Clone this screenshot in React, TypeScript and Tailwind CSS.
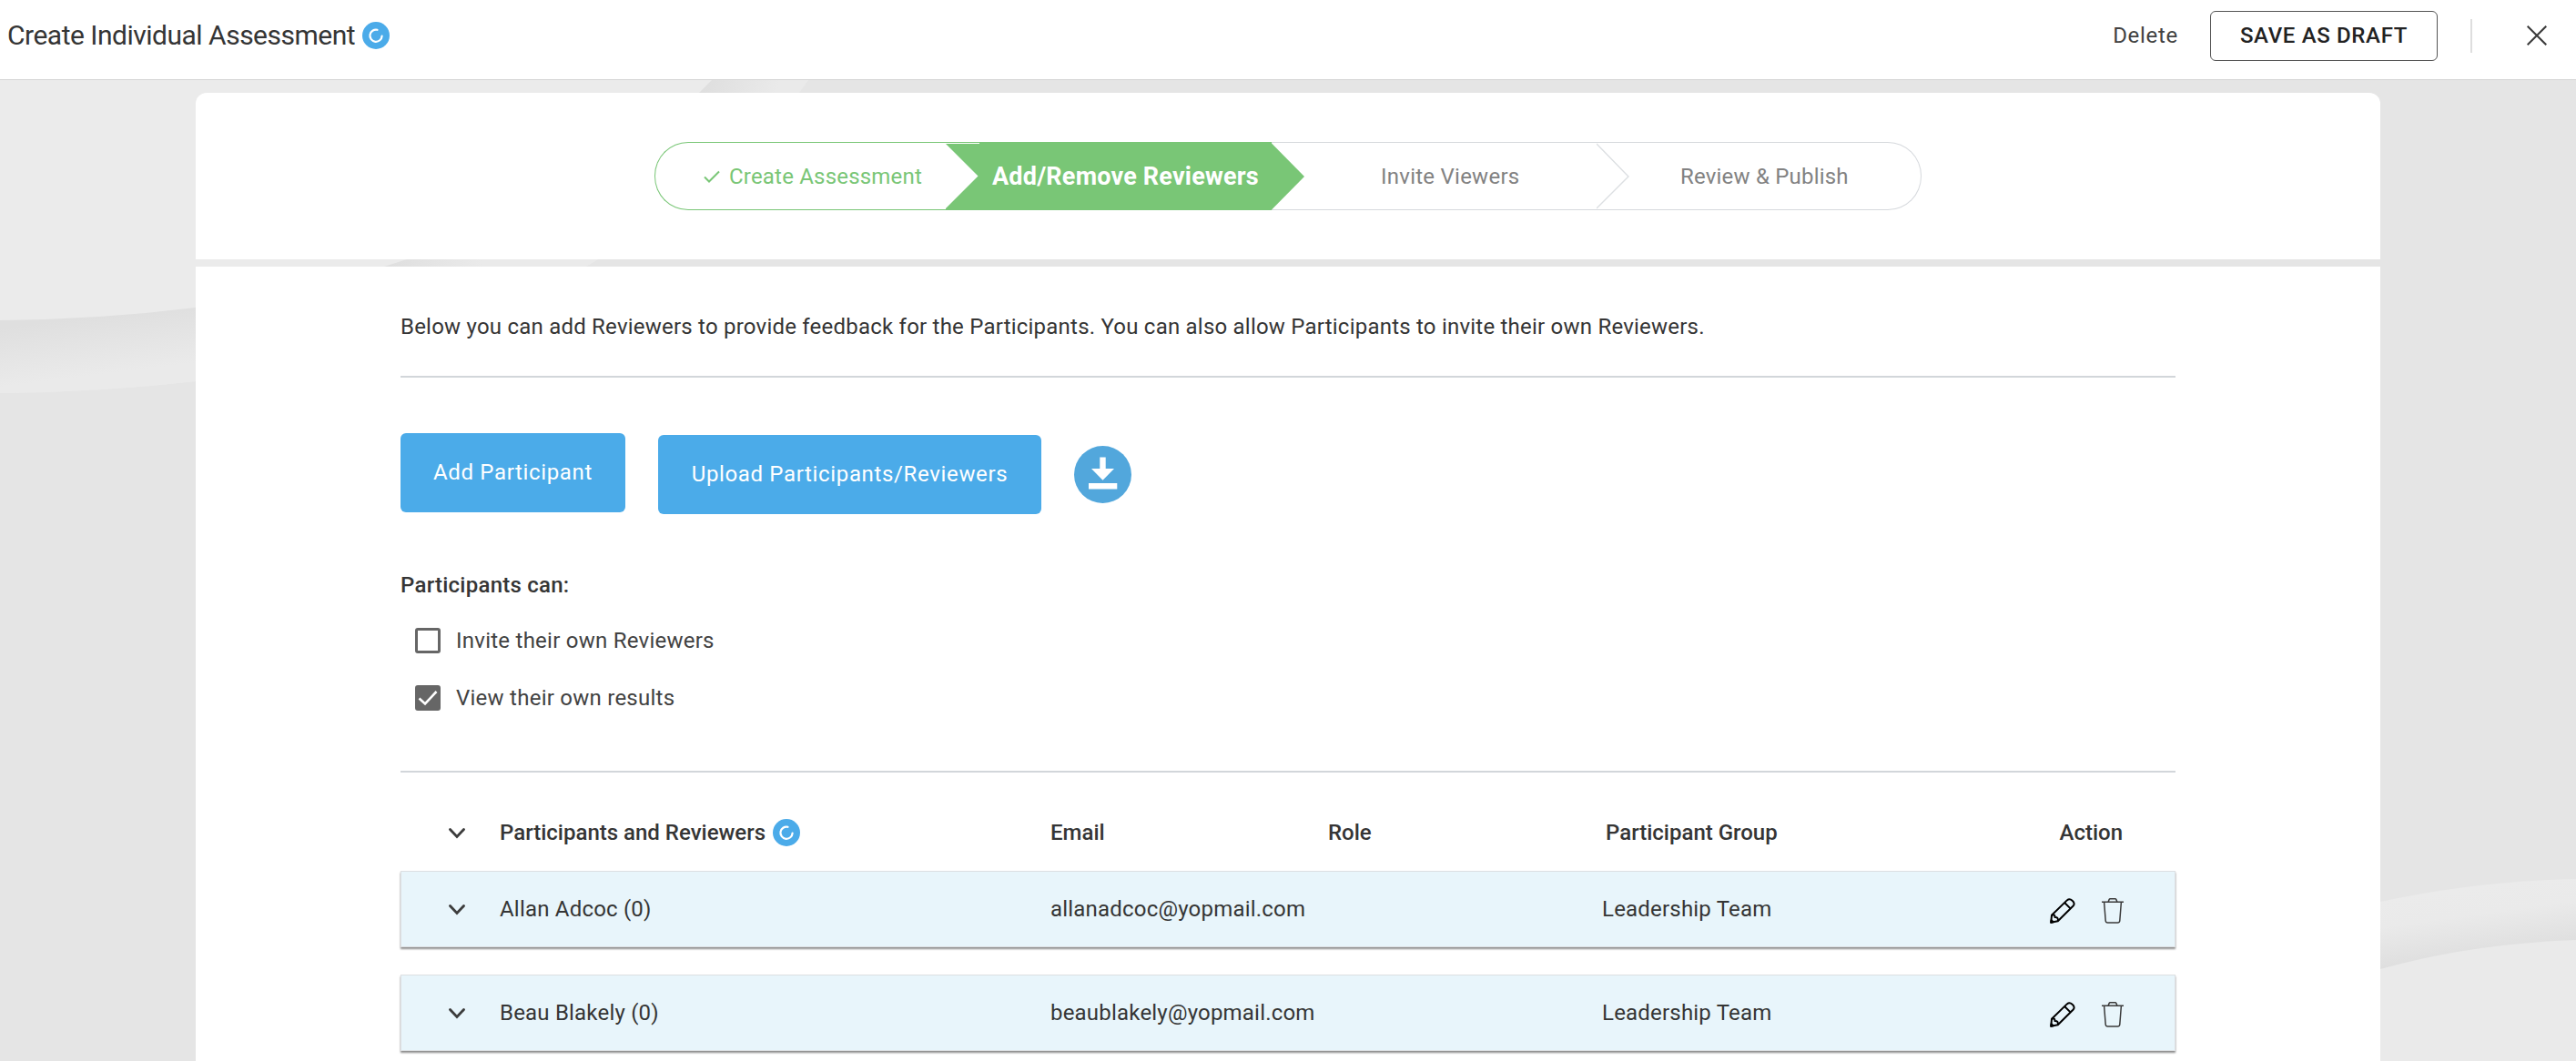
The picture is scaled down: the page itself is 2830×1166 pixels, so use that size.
import { useState } from "react";

const participants = [
  { name: "Allan Adcoc (0)", email: "allanadcoc@yopmail.com", group: "Leadership Team" },
  { name: "Beau Blakely (0)", email: "beaublakely@yopmail.com", group: "Leadership Team" },
];

function Backdrop() {
  return (
    <svg className="absolute inset-0 h-full w-full" viewBox="0 0 2830 1166" preserveAspectRatio="none">
      <defs>
        <linearGradient id="bandLeft" gradientUnits="userSpaceOnUse" x1="100" y1="348" x2="108" y2="412">
          <stop offset="0" stopColor="#dfdfdf" />
          <stop offset="1" stopColor="#eaeaea" />
        </linearGradient>
        <linearGradient id="bandMid" gradientUnits="userSpaceOnUse" x1="430" y1="290" x2="530" y2="290">
          <stop offset="0" stopColor="#dfdfdf" />
          <stop offset="1" stopColor="#eaeaea" />
        </linearGradient>
        <linearGradient id="bandTop" gradientUnits="userSpaceOnUse" x1="775" y1="95" x2="850" y2="115">
          <stop offset="0" stopColor="#dfdfdf" />
          <stop offset="1" stopColor="#eaeaea" />
        </linearGradient>
        <linearGradient id="bandRight" gradientUnits="userSpaceOnUse" x1="2720" y1="975" x2="2730" y2="1048">
          <stop offset="0" stopColor="#ebebeb" />
          <stop offset="0.4" stopColor="#eaeaea" />
          <stop offset="1" stopColor="#dfdfdf" />
        </linearGradient>
      </defs>
      <rect width="2830" height="1166" fill="#e5e5e5" />
      <path d="M0 0H950L888 88Q780 210 650 289Q430 375 215 419Q110 431 0 432Z" fill="#ebebeb" />
      <path d="M0 352Q110 351 215 338V419Q110 431 0 432Z" fill="url(#bandLeft)" />
      <path d="M447 285H657L644 293H422Z" fill="url(#bandMid)" />
      <path d="M782 88H888L878 102H768Z" fill="url(#bandTop)" />
      <path d="M2615 991Q2720 968 2830 966V1166H2615Z" fill="url(#bandRight)" />
      <path d="M2615 1065Q2715 1037 2830 1033V1166H2615Z" fill="#eaeaea" />
    </svg>
  );
}

function RefreshBadge() {
  return (
    <svg className="h-[30px] w-[30px] shrink-0" viewBox="0 0 30 30" fill="none">
      <circle cx="15" cy="15" r="15" fill="#4babe9" />
      <path d="M16.5 8.8A6.6 6.6 0 1 0 21.6 15.6" stroke="#fff" strokeWidth="2.2" strokeLinecap="round" />
    </svg>
  );
}

function Chevron() {
  return (
    <svg className="mt-0.5 h-3 w-[18px]" viewBox="0 0 18 12" fill="none">
      <path d="M1.5 1.5L9 9.5L16.5 1.5" stroke="#3c3c3c" strokeWidth="2.8" strokeLinecap="round" />
    </svg>
  );
}

function PencilIcon() {
  return (
    <svg className="h-7 w-7" viewBox="0 0 28 28" fill="none" stroke="#000" strokeWidth="2" strokeLinejoin="round">
      <path d="M2 18.8L18.8 2.4Q21.6 0 24.6 2.7Q28.2 5.8 25.4 8.8L8.8 25.2L1.2 26.8Z" />
      <path d="M16.4 5.2L22.8 11.6M2 18.8Q6 17.4 5.4 21Q9.6 20.6 8.8 25.2" />
      <path d="M1.2 26.8L1.6 24.2L3.8 26.2Z" fill="#000" />
    </svg>
  );
}

function TrashIcon() {
  return (
    <svg className="h-7 w-6" viewBox="0 0 24 28" fill="none" stroke="#3a3a3a" strokeWidth="1.5">
      <path d="M0 4.3H24M7 4.3L8.2 1.4Q8.5.8 9.3.8H14.7Q15.5.8 15.8 1.4L17 4.3" />
      <path d="M2.6 4.3L4.2 24.7Q4.4 27 6.6 27H17.4Q19.6 27 19.8 24.7L21.4 4.3" />
    </svg>
  );
}

function Stepper() {
  return (
    <div className="flex h-[75px] text-2xl text-[#828282]">
      <div className="flex w-[320px] items-center rounded-l-[37px] border-y border-l border-[#79c676] pl-[53px] text-[#79c676]">
        <svg className="h-3.5 w-[18px]" viewBox="0 0 18 14" fill="none">
          <path d="M1 7.5L6 12.5L17 1.5" stroke="#79c676" strokeWidth="2" />
        </svg>
        <span className="ml-2.5 whitespace-nowrap tracking-[0.2px]">Create Assessment</span>
      </div>

      <div className="relative flex w-[358px] items-center bg-[#79c676] pl-[51px] text-white">
        <svg className="absolute left-0 top-0 h-[75px] w-[37px]" viewBox="0 0 37 75" fill="#fff">
          <path d="M0 1H37V2H0ZM0 2L35.5 37.5L0 73Z" />
        </svg>
        <svg className="absolute left-full top-0 z-10 h-[75px] w-[36px]" viewBox="0 0 36 75" fill="#79c676">
          <path d="M0 1.5L36 38L0 74.5Z" />
        </svg>
        <span className="whitespace-nowrap pt-0.5 text-[27px] font-bold tracking-[0.2px]">Add/Remove Reviewers</span>
      </div>

      <div className="relative flex w-[357px] items-center border-y border-[#d6d9dd] pl-[120px]">
        <span className="whitespace-nowrap tracking-[0.25px]">Invite Viewers</span>
        <svg className="absolute left-full top-0 h-[73px] w-[36px]" viewBox="0 0 36 73" fill="none" stroke="#dcdfe2" strokeWidth="1.4">
          <path d="M0 1L35 37L0 72" />
        </svg>
      </div>

      <div className="flex w-[357px] items-center rounded-r-[37px] border-y border-r border-[#d6d9dd] pl-[92px]">
        <span className="whitespace-nowrap tracking-[0.2px]">Review &amp; Publish</span>
      </div>
    </div>
  );
}

function Checkbox({ label, checked, onChange }: { label: string; checked: boolean; onChange: () => void }) {
  return (
    <button onClick={onChange} className="flex h-9 items-center text-2xl tracking-[0.25px] text-[#424242]">
      <span
        className={`flex h-7 w-7 items-center justify-center rounded-[3px] border-[3px] border-[#666] ${
          checked ? "bg-[#666]" : "bg-white"
        }`}
      >
        {checked && (
          <svg className="h-[22px] w-[22px] shrink-0" viewBox="0 0 22 22" fill="none">
            <path d="M1.5 11.5L8 17.5L20.5 4" stroke="#fff" strokeWidth="2.6" />
          </svg>
        )}
      </span>
      <span className="ml-[17px]">{label}</span>
    </button>
  );
}

function App() {
  const [canInvite, setCanInvite] = useState(false);
  const [canView, setCanView] = useState(true);

  return (
    <div className="relative flex h-[1166px] w-[2830px] flex-col overflow-hidden font-['Roboto',sans-serif] text-2xl text-[#353535]">
      <Backdrop />

      {/* Header */}
      <header className="relative flex h-[88px] shrink-0 items-center justify-between border-b border-[#d6d6d6] bg-white pb-[9px] pl-2 pr-8">
        <div className="flex items-center gap-2">
          <h1 className="text-[30px] tracking-[-0.5px]">Create Individual Assessment</h1>
          <RefreshBadge />
        </div>
        <div className="flex items-center">
          <button className="tracking-[0.7px] text-[#424242]">Delete</button>
          <button className="ml-[35px] flex h-[55px] w-[250px] items-center justify-center rounded-md border border-[#555] font-medium tracking-[0.65px] text-[#222]">
            SAVE AS DRAFT
          </button>
          <div className="ml-9 h-[37px] w-0.5 bg-[#dedede]" />
          <svg className="ml-[60px] h-[22px] w-[22px]" viewBox="0 0 22 22" stroke="#3a3a3a" strokeWidth="2">
            <path d="M.7.7L21.3 21.3M21.3.7L.7 21.3" />
          </svg>
        </div>
      </header>

      <main className="relative flex grow flex-col gap-2 px-[215px] pt-3.5">
        <section className="flex h-[183px] shrink-0 justify-center rounded-t-xl bg-white pt-[54px]">
          <Stepper />
        </section>

        <section className="grow bg-white px-[225px] pt-12">
          <p className="h-9 leading-9 tracking-[0.22px]">
            Below you can add Reviewers to provide feedback for the Participants. You can also allow Participants to
            invite their own Reviewers.
          </p>
          <hr className="mt-9 border-t-2 border-[#d2d6da]" />

          <div className="mt-[61px] flex h-[89px] items-start">
            <button className="h-[87px] w-[247px] rounded-md bg-[#4babe9] pb-0.5 tracking-[0.65px] text-white">
              Add Participant
            </button>
            <button className="ml-9 mt-0.5 h-[87px] w-[421px] rounded-md bg-[#4babe9] pb-0.5 tracking-[0.65px] text-white">
              Upload Participants/Reviewers
            </button>
            <button className="ml-9 mt-3.5">
              <svg className="h-[63px] w-[63px]" viewBox="0 0 63 63">
                <circle cx="31.5" cy="31.5" r="31.5" fill="#52a7dc" />
                <path d="M28.3 12.5H34.7V25H44L31.5 37.8L19 25H28.3ZM16 41H47.3V47.6H16Z" fill="#fff" />
              </svg>
            </button>
          </div>

          <h2 className="mt-[60px] h-9 font-medium leading-9 tracking-[0.25px]">Participants can:</h2>
          <div className="mt-[25px] flex flex-col items-start gap-[27px] pl-4">
            <Checkbox label="Invite their own Reviewers" checked={canInvite} onChange={() => setCanInvite(!canInvite)} />
            <Checkbox label="View their own results" checked={canView} onChange={() => setCanView(!canView)} />
          </div>
          <hr className="mt-[62px] border-t-2 border-[#d2d6da]" />

          {/* Participants table */}
          <div className="grid h-[108px] grid-cols-[109px_605px_305px_305px_454px_1fr] items-center pt-6 font-medium">
            <div className="pl-[53px]">
              <Chevron />
            </div>
            <div className="flex items-center gap-2">
              Participants and Reviewers
              <RefreshBadge />
            </div>
            <div>Email</div>
            <div>Role</div>
            <div>Participant Group</div>
            <div className="pr-[58px] text-right">Action</div>
          </div>
          <div className="flex flex-col gap-[30px]">
            {participants.map((person) => (
              <div
                key={person.email}
                className="grid h-[84px] grid-cols-[108px_605px_606px_1fr] items-center border border-[#dcdfe2] bg-[#e8f5fb] tracking-[0.2px] shadow-[0_2px_2px_rgba(0,0,0,0.45)]"
              >
                <div className="pl-[52px]">
                  <Chevron />
                </div>
                <div>{person.name}</div>
                <div>{person.email}</div>
                <div className="flex items-center">
                  <span>{person.group}</span>
                  <div className="ml-auto flex gap-[29px] pr-14 pt-1">
                    <PencilIcon />
                    <TrashIcon />
                  </div>
                </div>
              </div>
            ))}
          </div>
        </section>
      </main>
    </div>
  );
}

export default App;
